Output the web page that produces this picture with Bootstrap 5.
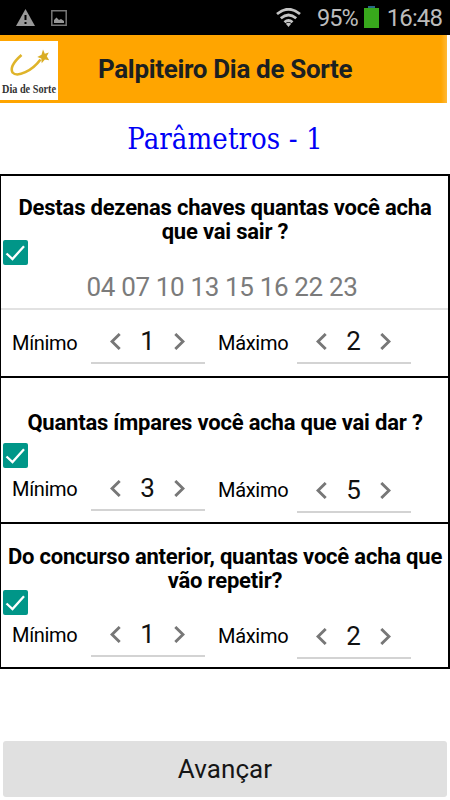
<!DOCTYPE html>
<html lang="pt-BR">
<head>
<meta charset="utf-8">
<meta name="viewport" content="width=device-width, initial-scale=1">
<title>Palpiteiro Dia de Sorte</title>
<link href="https://cdn.jsdelivr.net/npm/bootstrap@5.3.0/dist/css/bootstrap.min.css" rel="stylesheet">
<style>
body{font-family:Roboto,"Liberation Sans",sans-serif;color:#000;width:450px;height:800px;overflow:hidden}
svg{display:block;flex:none}
.status{height:35px;color:#bcbcbc;font-size:24px;line-height:37px;padding-right:8px}
.status .warn{margin:9px 0 0 16px}
.status .pic{margin:10px 0 0 16px}
.status .pct{font-size:23.5px;margin-left:16px;letter-spacing:-1px}
.status .bat{margin:6px 0 0 6px}
.status .clock{margin-left:8px;letter-spacing:-.9px}
.topbar{height:68px;width:447px;background:linear-gradient(90deg,#ffa500 441px,#ffb937 447px)}
.brand{width:58px;height:59px;margin-top:6px;background:#fff}
.app-title{margin-left:40px;font-weight:700;font-size:26px;line-height:68px;color:#1b2021;letter-spacing:-.33px}
.page-title{height:71px;font-family:"DejaVu Serif Condensed","DejaVu Serif",serif;font-size:29px;line-height:73px;color:#0000f5;letter-spacing:.1px}
.question{border:solid #000;border-width:2px 2px 0 1px;width:450px}
.q-first{height:202px;padding-top:20px}
.q-second{height:146px;padding-top:33px}
.q-third{height:147px;padding-top:21px;border-bottom-width:2px}
.prompt{font-weight:700;font-size:22px;line-height:24px;margin-left:1px;letter-spacing:-.2px}
.tick{width:25px;height:25px;margin:-3px 0 0 2px;border-radius:2px;background:#009688}
.q-first .tick{margin-top:-4px}
.q-second .tick{margin-top:8px}
.numbers{height:45px;border-bottom:2px solid #e2e2e2;font-size:26px;line-height:44px;color:#7b7b7b;padding-right:5px;letter-spacing:-.35px}
.range{padding:10px 0 0 11px}
.q-second .range,.q-third .range{padding-top:0;margin-top:-1px}
.q-third .range{margin-top:-2px}
.lbl{font-size:20px;line-height:46px;height:44px;letter-spacing:-.3px}
.q-second .lbl,.q-third .lbl{line-height:44px}
.lbl-min{width:79px}
.lbl-max{width:79px;margin-left:13px}
.stepper{width:114px;height:44px;border-bottom:2px solid #d3d3d3;padding:1px 20px 0 19px;font-size:26px;line-height:42px;color:#111}
.stepper span{margin-top:-1px}
.q-second .late,.q-third .late{margin-top:1.5px}
.q-second .lbl.late,.q-third .lbl.late{margin-top:1px}
.next-btn{width:444px;height:56px;margin:72px 0 0 3px;border-radius:3px;background:#e0e0e0;color:#161616;font-size:26px;line-height:54px;border:0;letter-spacing:.1px}
</style>
<script src="https://cdn.jsdelivr.net/npm/bootstrap@5.3.0/dist/js/bootstrap.bundle.min.js"></script>
</head>
<body class="bg-white">
<svg width="0" height="0" class="position-absolute">
  <symbol id="check" viewBox="0 0 25 25"><path d="M3.500 13.500l6 5.500L21 6.200" fill="none" stroke="#fff" stroke-width="2.300"/></symbol>
  <symbol id="prev" viewBox="0 0 11 17"><path d="M9.700 1L2 8.500 9.700 16" fill="none" stroke="#777" stroke-width="2.900"/></symbol>
  <symbol id="fwd" viewBox="0 0 11 17"><path d="M1.300 1L9 8.500 1.300 16" fill="none" stroke="#777" stroke-width="2.900"/></symbol>
</svg>

<div class="status bg-black d-flex align-items-start">
  <svg class="warn" width="19" height="17" viewBox="0 0 19 17"><path d="M9.500 0L19 17H0z" fill="#999"/><path d="M9.500 6v5M9.500 13v2" stroke="#000" stroke-width="2"/></svg>
  <svg class="pic" width="16" height="16" viewBox="0 0 16 16"><path d="M.8.8h14.400v14.400H.8z" fill="none" stroke="#777" stroke-width="1.500"/><path d="M3 13V10l2.500-2.500L8 10l2-1 3 2v2z" fill="#999"/></svg>
  <svg class="ms-auto mt-2" width="25" height="19" viewBox="0 0 25 19" fill="none" stroke="#c4c4c4" stroke-width="2.800"><path d="M1 6q11.500-9.500 23 0M4.800 10.300q7.700-6.600 15.400 0M8.500 14.200q4-3.500 8 0"/><path d="M9.800 15.700q2.700-2 5.400 0L12.500 19z" fill="#c4c4c4" stroke="none"/></svg>
  <span class="pct">95%</span>
  <svg class="bat" width="15" height="22" viewBox="0 0 15 22"><path d="M4 0h7v3H4z" fill="#286884"/><path d="M0 2h15v20H0z" fill="#38a81c"/></svg>
  <span class="clock">16:48</span>
</div>

<header class="topbar d-flex">
  <div class="brand">
    <svg width="58" height="59" viewBox="0 0 58 59"><path d="M21.500 14Q9 25 12.500 31.500c5 5.500 20-2 28-13" fill="none" stroke="#dfb42a" stroke-width="2.600"/><path d="M43 8.500l1.800 4.200 4-1.200-2 3.800 2.400 4-4.300-.8-3.200 3.800-.4-4.800-4-1.500 4.200-2.200z" fill="#d9ad25"/><text x="2" y="52" textLength="54" lengthAdjust="spacingAndGlyphs" font-family="Liberation Serif,serif" font-weight="700" font-size="13" fill="#333">Dia de Sorte</text></svg>
  </div>
  <div class="app-title text-nowrap">Palpiteiro Dia de Sorte</div>
</header>

<main>
  <div class="page-title text-center text-nowrap">Parâmetros - 1</div>

  <section class="question q-first">
    <div class="prompt text-center text-nowrap">Destas dezenas chaves quantas você acha<br>que vai sair ?</div>
    <div class="tick"><svg width="25" height="25"><use href="#check"/></svg></div>
    <div class="numbers text-center">04 07 10 13 15 16 22 23</div>
    <div class="range d-flex">
      <div class="lbl lbl-min">Mínimo</div>
      <div class="stepper d-flex align-items-center justify-content-between"><svg width="11" height="17"><use href="#prev"/></svg><span>1</span><svg width="11" height="17"><use href="#fwd"/></svg></div>
      <div class="lbl lbl-max late">Máximo</div>
      <div class="stepper late d-flex align-items-center justify-content-between"><svg width="11" height="17"><use href="#prev"/></svg><span>2</span><svg width="11" height="17"><use href="#fwd"/></svg></div>
    </div>
  </section>

  <section class="question q-second">
    <div class="prompt text-center text-nowrap">Quantas ímpares você acha que vai dar ?</div>
    <div class="tick"><svg width="25" height="25"><use href="#check"/></svg></div>
    <div class="range d-flex">
      <div class="lbl lbl-min">Mínimo</div>
      <div class="stepper d-flex align-items-center justify-content-between"><svg width="11" height="17"><use href="#prev"/></svg><span>3</span><svg width="11" height="17"><use href="#fwd"/></svg></div>
      <div class="lbl lbl-max late">Máximo</div>
      <div class="stepper late d-flex align-items-center justify-content-between"><svg width="11" height="17"><use href="#prev"/></svg><span>5</span><svg width="11" height="17"><use href="#fwd"/></svg></div>
    </div>
  </section>

  <section class="question q-third">
    <div class="prompt text-center text-nowrap">Do concurso anterior, quantas você acha que<br>vão repetir?</div>
    <div class="tick"><svg width="25" height="25"><use href="#check"/></svg></div>
    <div class="range d-flex">
      <div class="lbl lbl-min">Mínimo</div>
      <div class="stepper d-flex align-items-center justify-content-between"><svg width="11" height="17"><use href="#prev"/></svg><span>1</span><svg width="11" height="17"><use href="#fwd"/></svg></div>
      <div class="lbl lbl-max late">Máximo</div>
      <div class="stepper late d-flex align-items-center justify-content-between"><svg width="11" height="17"><use href="#prev"/></svg><span>2</span><svg width="11" height="17"><use href="#fwd"/></svg></div>
    </div>
  </section>

  <button type="button" class="next-btn d-block p-0">Avançar</button>
</main>
</body>
</html>
